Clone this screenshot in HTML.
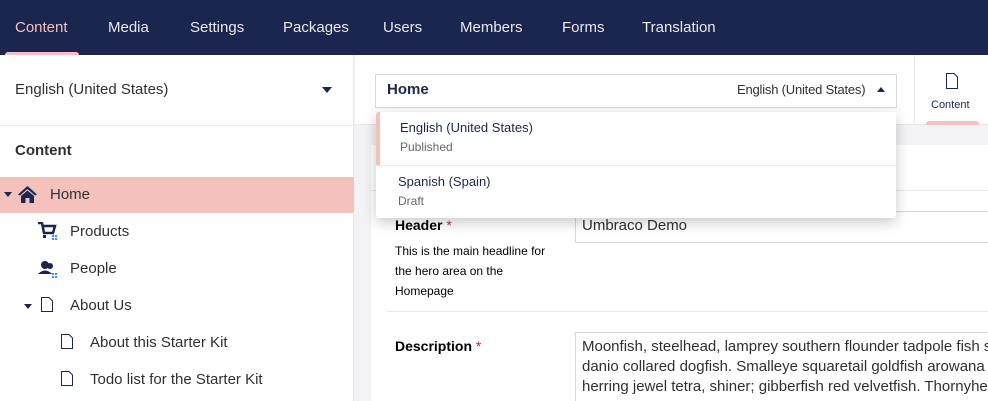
<!DOCTYPE html>
<html><head><meta charset="utf-8"><style>
*{box-sizing:border-box;margin:0;padding:0}
html,body{width:988px;height:401px;overflow:hidden}
body{font-family:"Liberation Sans",sans-serif;background:#f3f3f5;position:relative;color:#1b264f}
.top{position:absolute;left:0;top:0;width:988px;height:55px;background:#1b264f}
.top span{position:absolute;top:19px;font-size:15px;color:#e9e9eb}
.top .act{color:#f5c1bc}
.ind{position:absolute;left:5px;top:52px;width:74px;height:4px;background:#f5c1bc;border-radius:3px 3px 0 0}
.left{position:absolute;left:0;top:55px;width:354px;height:346px;background:#fff;border-right:1px solid #e9e9eb}
.abs{position:absolute;white-space:nowrap}
.tree{font-size:15px;color:#303033}
.hdr{position:absolute;left:355px;top:55px;width:633px;height:70px;background:#fff;border-bottom:1px solid #e9e9eb}
.box{position:absolute;left:371px;top:145px;width:617px;height:256px;background:#fff;overflow:hidden}
</style></head><body>
<div class="top">
<span class="act" style="left:15px">Content</span>
<span style="left:108px">Media</span>
<span style="left:190px">Settings</span>
<span style="left:283px">Packages</span>
<span style="left:383px">Users</span>
<span style="left:460px">Members</span>
<span style="left:562px">Forms</span>
<span style="left:642px">Translation</span>
<div class="ind"></div>
</div>
<div class="left">
<div class="abs" style="left:15px;top:26px;font-size:15px;color:#303033">English (United States)</div>
<div class="abs" style="left:322px;top:32px;width:0;height:0;border-left:5px solid transparent;border-right:5px solid transparent;border-top:6px solid #1b264f"></div>
<div class="abs" style="left:0;top:70px;width:354px;height:1px;background:#e9e9eb"></div>
<div class="abs" style="left:15px;top:87px;font-size:15px;font-weight:bold;color:#303033">Content</div>
<div class="abs" style="left:0;top:122px;width:354px;height:36px;background:#f5c1bc"></div>
<div class="abs" style="left:4px;top:137px;border-left:4px solid transparent;border-right:4px solid transparent;border-top:5px solid #1b264f"></div>
<svg class="abs" style="left:18px;top:131px" width="19" height="17" viewBox="0 0 19 17"><path d="M9.5 0L0 8.5 2 9.5 9.5 3 17 9.5 19 8.5z M3 10 9.5 4.5 16 10V17H11.5V12H7.5V17H3z" fill="#1b264f"/></svg>
<div class="abs tree" style="left:50px;top:131px">Home</div>
<svg class="abs" style="left:38px;top:167px" width="22" height="19" viewBox="0 0 22 19"><path d="M0 1H4L6 11H15L17 4H5" fill="none" stroke="#1b264f" stroke-width="2.5"/><rect x="5" y="13" width="3" height="3" fill="#1b264f"/><g fill="#3399ff"><rect x="14" y="13" width="2" height="2"/><rect x="17" y="13" width="2" height="2"/><rect x="14" y="16" width="2" height="2"/><rect x="17" y="16" width="2" height="2"/></g></svg>
<div class="abs tree" style="left:70px;top:168px">Products</div>
<svg class="abs" style="left:38px;top:205px" width="22" height="19" viewBox="0 0 22 19"><circle cx="7" cy="5" r="4" fill="#1b264f"/><path d="M0 14Q7 7 14 14Z" fill="#1b264f"/><circle cx="12" cy="6" r="3" fill="#1b264f"/><g fill="#3399ff"><rect x="14" y="13" width="2" height="2"/><rect x="17" y="13" width="2" height="2"/><rect x="14" y="16" width="2" height="2"/><rect x="17" y="16" width="2" height="2"/></g></svg>
<div class="abs tree" style="left:70px;top:205px">People</div>
<div class="abs" style="left:24px;top:249px;border-left:4px solid transparent;border-right:4px solid transparent;border-top:5px solid #1b264f"></div>
<svg class="abs" style="left:41px;top:242px" width="12" height="15" viewBox="0 0 12 15"><path d="M.5.5H8L11.5 4V14.5H.5Z" fill="none" stroke="#1b264f"/></svg>
<div class="abs tree" style="left:70px;top:242px">About Us</div>
<svg class="abs" style="left:61px;top:279px" width="12" height="15" viewBox="0 0 12 15"><path d="M.5.5H8L11.5 4V14.5H.5Z" fill="none" stroke="#1b264f"/></svg>
<div class="abs tree" style="left:90px;top:279px">About this Starter Kit</div>
<svg class="abs" style="left:61px;top:316px" width="12" height="15" viewBox="0 0 12 15"><path d="M.5.5H8L11.5 4V14.5H.5Z" fill="none" stroke="#1b264f"/></svg>
<div class="abs tree" style="left:90px;top:316px">Todo list for the Starter Kit</div>
</div>
<div class="hdr">
<div class="abs" style="left:20px;top:19px;width:522px;height:34px;border:1px solid #d8d7d9"></div>
<div class="abs" style="left:32px;top:26px;font-size:15px;font-weight:bold;color:#1b264f">Home</div>
<div class="abs" style="left:382px;top:27px;font-size:13px;color:#303033;letter-spacing:-0.2px">English (United States)</div>
<div class="abs" style="left:522px;top:32px;border-left:4px solid transparent;border-right:4px solid transparent;border-bottom:5px solid #1b264f"></div>
<div class="abs" style="left:559px;top:0;width:1px;height:70px;background:#e9e9eb"></div>
<svg class="abs" style="left:591px;top:18px" width="12" height="16" viewBox="0 0 12 16"><path d="M.5.5H8L11.5 4V15.5H.5Z" fill="none" stroke="#1b264f"/></svg>
<div class="abs" style="left:576px;top:44px;font-size:11px;color:#1b264f">Content</div>
<div class="abs" style="left:571px;top:66px;width:53px;height:4px;background:#f5c1bc;border-radius:3px 3px 0 0"></div>
</div>
<div class="box">
<div class="abs" style="left:0;top:45px;width:617px;height:1px;background:#e9e9eb"></div>
<div class="abs" style="left:24px;top:72px;font-size:14px;font-weight:bold;color:#000">Header <span style="color:#d42054;font-weight:normal">*</span></div>
<div class="abs" style="left:24px;top:96px;font-size:12px;line-height:20px;color:#000">This is the main headline for<br>the hero area on the<br>Homepage</div>
<div class="abs" style="left:204px;top:66px;width:413px;height:32px;border:1px solid #d8d7d9;border-right:none"></div>
<div class="abs" style="left:211px;top:72px;font-size:15px;color:#303033">Umbraco Demo</div>
<div class="abs" style="left:16px;top:166px;width:601px;height:1px;background:#e9e9eb"></div>
<div class="abs" style="left:24px;top:193px;font-size:14px;font-weight:bold;color:#000">Description <span style="color:#d42054;font-weight:normal">*</span></div>
<div class="abs" style="left:204px;top:187px;width:413px;height:80px;border:1px solid #d8d7d9;border-right:none;overflow:hidden;padding:4px 6px;font-size:15px;line-height:20px;color:#303033">Moonfish, steelhead, lamprey southern flounder tadpole fish sculpin<br>danio collared dogfish. Smalleye squaretail goldfish arowana butterfly<br>herring jewel tetra, shiner; gibberfish red velvetfish. Thornyhead yellow</div>
</div>
<div class="abs" style="left:376px;top:112px;width:520px;height:106px;background:#fff;border-radius:3px;box-shadow:0 4px 14px rgba(0,0,0,.22)">
<div class="abs" style="left:0;top:0;width:4px;height:53px;background:#f5c1bc;border-radius:3px 0 0 0"></div>
<div class="abs" style="left:24px;top:8px;font-size:13px;color:#1b264f">English (United States)</div>
<div class="abs" style="left:24px;top:28px;font-size:12px;color:#68676b">Published</div>
<div class="abs" style="left:0;top:53px;width:520px;height:1px;background:#e9e9eb"></div>
<div class="abs" style="left:22px;top:62px;font-size:13px;color:#1b264f">Spanish (Spain)</div>
<div class="abs" style="left:22px;top:82px;font-size:12px;color:#68676b">Draft</div>
</div>
</body></html>
